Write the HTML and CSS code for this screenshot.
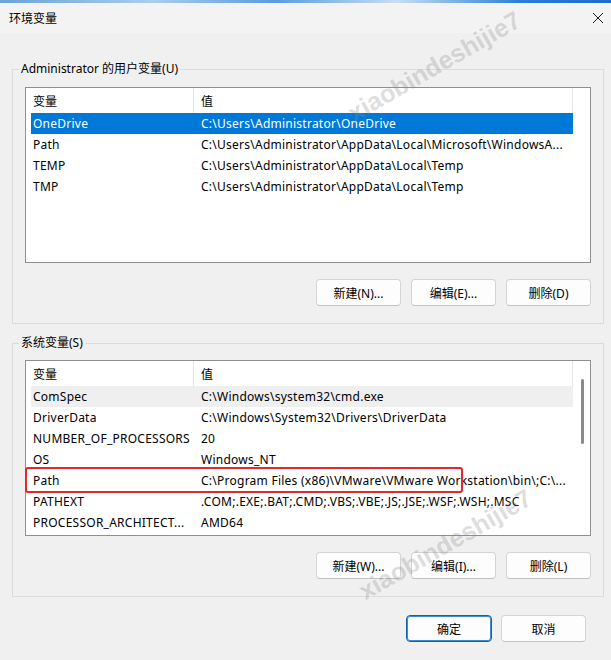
FILE: index.html
```html
<!DOCTYPE html>
<html lang="zh-CN">
<head>
<meta charset="utf-8">
<title>环境变量</title>
<link rel="stylesheet" href="styles.css">
</head>
<body>
<div class="strip"></div>
<div class="titlebar">
  <span class="title">环境变量</span>
  <svg class="close" width="12" height="12" viewBox="0 0 12 12"><path d="M1 1L11 11M11 1L1 11" stroke="#1a1a1a" stroke-width="1"/></svg>
</div>
<div class="main">
  <fieldset class="group g1">
    <legend>Administrator 的用户变量(U)</legend>
    <div class="list">
      <div class="rows">
        <div class="row head"><span class="c1">变量</span><span class="c2">值</span></div>
        <div class="row sel"><span class="c1">OneDrive</span><span class="c2">C:\Users\Administrator\OneDrive</span></div>
        <div class="row"><span class="c1">Path</span><span class="c2">C:\Users\Administrator\AppData\Local\Microsoft\WindowsA...</span></div>
        <div class="row"><span class="c1">TEMP</span><span class="c2">C:\Users\Administrator\AppData\Local\Temp</span></div>
        <div class="row"><span class="c1">TMP</span><span class="c2">C:\Users\Administrator\AppData\Local\Temp</span></div>
      </div>
      <div class="scroll"></div>
    </div>
    <div class="buttons">
      <button class="btn">新建(N)...</button>
      <button class="btn">编辑(E)...</button>
      <button class="btn">删除(D)</button>
    </div>
  </fieldset>
  <fieldset class="group g2">
    <legend>系统变量(S)</legend>
    <div class="list">
      <div class="rows">
        <div class="row head"><span class="c1">变量</span><span class="c2">值</span></div>
        <div class="row hover"><span class="c1">ComSpec</span><span class="c2">C:\Windows\system32\cmd.exe</span></div>
        <div class="row"><span class="c1">DriverData</span><span class="c2">C:\Windows\System32\Drivers\DriverData</span></div>
        <div class="row"><span class="c1">NUMBER_OF_PROCESSORS</span><span class="c2">20</span></div>
        <div class="row"><span class="c1">OS</span><span class="c2">Windows_NT</span></div>
        <div class="row marked"><span class="c1">Path</span><span class="c2">C:\Program Files (x86)\VMware\VMware Workstation\bin\;C:\...</span></div>
        <div class="row"><span class="c1">PATHEXT</span><span class="c2">.COM;.EXE;.BAT;.CMD;.VBS;.VBE;.JS;.JSE;.WSF;.WSH;.MSC</span></div>
        <div class="row"><span class="c1">PROCESSOR_ARCHITECT...</span><span class="c2">AMD64</span></div>
      </div>
      <div class="scroll"><div class="thumb"></div></div>
    </div>
    <div class="buttons">
      <button class="btn">新建(W)...</button>
      <button class="btn">编辑(I)...</button>
      <button class="btn">删除(L)</button>
    </div>
  </fieldset>
  <div class="footer">
    <button class="btn primary">确定</button>
    <button class="btn">取消</button>
  </div>
</div>
<span class="wm wm1">xiaobindeshijie7</span>
<span class="wm wm2">xiaobindeshijie7</span>
</body>
</html>
```

FILE: styles.css
```css
html, body {
  margin: 0;
  padding: 0;
}
body {
  width: 611px;
  height: 660px;
  background: #f0f0f0;
  font-family: "Noto Sans", "Noto Sans CJK SC", sans-serif;
  font-size: 12px;
  color: #000;
  overflow: hidden;
  position: relative;
}
.strip {
  height: 3px;
  background: linear-gradient(90deg, #6da3d8 0%, #a9cdee 25%, #5b9be0 45%, #c9def3 65%, #2a7fd8 85%, #1c6cc8 100%);
}
.titlebar {
  height: 29px;
  display: flex;
  align-items: center;
  justify-content: space-between;
  padding: 0 7px 1px 9px;
  background: #f3f3f3;
}
.title {
  font-family: "Noto Sans CJK SC", sans-serif;
  font-size: 12px;
}
.close {
  display: block;
}
.main {
  padding: 28px 7px 0 12px;
}
.group {
  margin: 0;
  border: 1px solid #dcdcdc;
  padding: 10px 12px 17px 12px;
  min-inline-size: 0;
}
.group legend {
  margin-left: -6px;
  padding: 0 2px;
  line-height: 16px;
  font-family: "Noto Sans", "Noto Sans CJK SC", sans-serif;
}
.g2 {
  margin-top: 11px;
  padding-top: 9px;
}
.list {
  height: 174px;
  border: 1px solid #8f8f8f;
  background: #fff;
  display: flex;
}
.rows {
  flex: 1;
  margin-left: 5px;
}
.row {
  display: grid;
  grid-template-columns: 163px 1fr;
  height: 21px;
  align-items: center;
  white-space: nowrap;
  position: relative;
  letter-spacing: 0.25px;
}
.row .c1 {
  padding-left: 2px;
  overflow: hidden;
}
.row .c2 {
  padding-left: 7px;
  overflow: hidden;
}
.row.head {
  height: 25px;
  border-right: 1px solid #e5e5e5;
  letter-spacing: 0;
}
.row.head .c1 {
  height: 100%;
  display: flex;
  align-items: center;
  border-right: 1px solid #e5e5e5;
  font-family: "Noto Sans CJK SC", sans-serif;
}
.row.head .c2 {
  font-family: "Noto Sans CJK SC", sans-serif;
}
.row.sel {
  background: #0078d7;
  color: #fff;
}
.row.hover {
  background: #efefef;
}
.row.marked::after {
  content: "";
  position: absolute;
  left: -6px;
  top: -3px;
  width: 438px;
  height: 26px;
  border: 2px solid #e5262c;
  border-radius: 3px;
  box-sizing: border-box;
}
.scroll {
  width: 17px;
  padding-top: 18px;
}
.thumb {
  width: 3px;
  height: 65px;
  margin-left: 8px;
  background: #8a8a8a;
  border-radius: 2px;
}
.buttons {
  display: flex;
  justify-content: flex-end;
  gap: 10px;
  margin-top: 16px;
}
.btn {
  width: 85px;
  height: 27px;
  background: #fdfdfd;
  border: 1px solid #d4d4d4;
  border-bottom-color: #c2c2c2;
  border-radius: 4px;
  font-family: "Noto Sans", "Noto Sans CJK SC", sans-serif;
  font-size: 12px;
  color: #000;
  padding: 0;
}
.btn.primary {
  width: 86px;
  border: 1px solid #0a64b4;
  box-shadow: inset 0 0 0 1px #3d8ad1;
}
.footer {
  display: flex;
  justify-content: flex-end;
  gap: 9px;
  margin-top: 18px;
  padding-right: 18px;
}
.wm {
  position: absolute;
  font-family: "Liberation Sans", sans-serif;
  font-weight: bold;
  font-size: 25px;
  color: rgba(140, 140, 140, 0.3);
  white-space: nowrap;
  transform: rotate(-30deg);
  transform-origin: center;
}
.wm1 {
  left: 337px;
  top: 52px;
}
.wm2 {
  left: 348px;
  top: 530px;
}
```
